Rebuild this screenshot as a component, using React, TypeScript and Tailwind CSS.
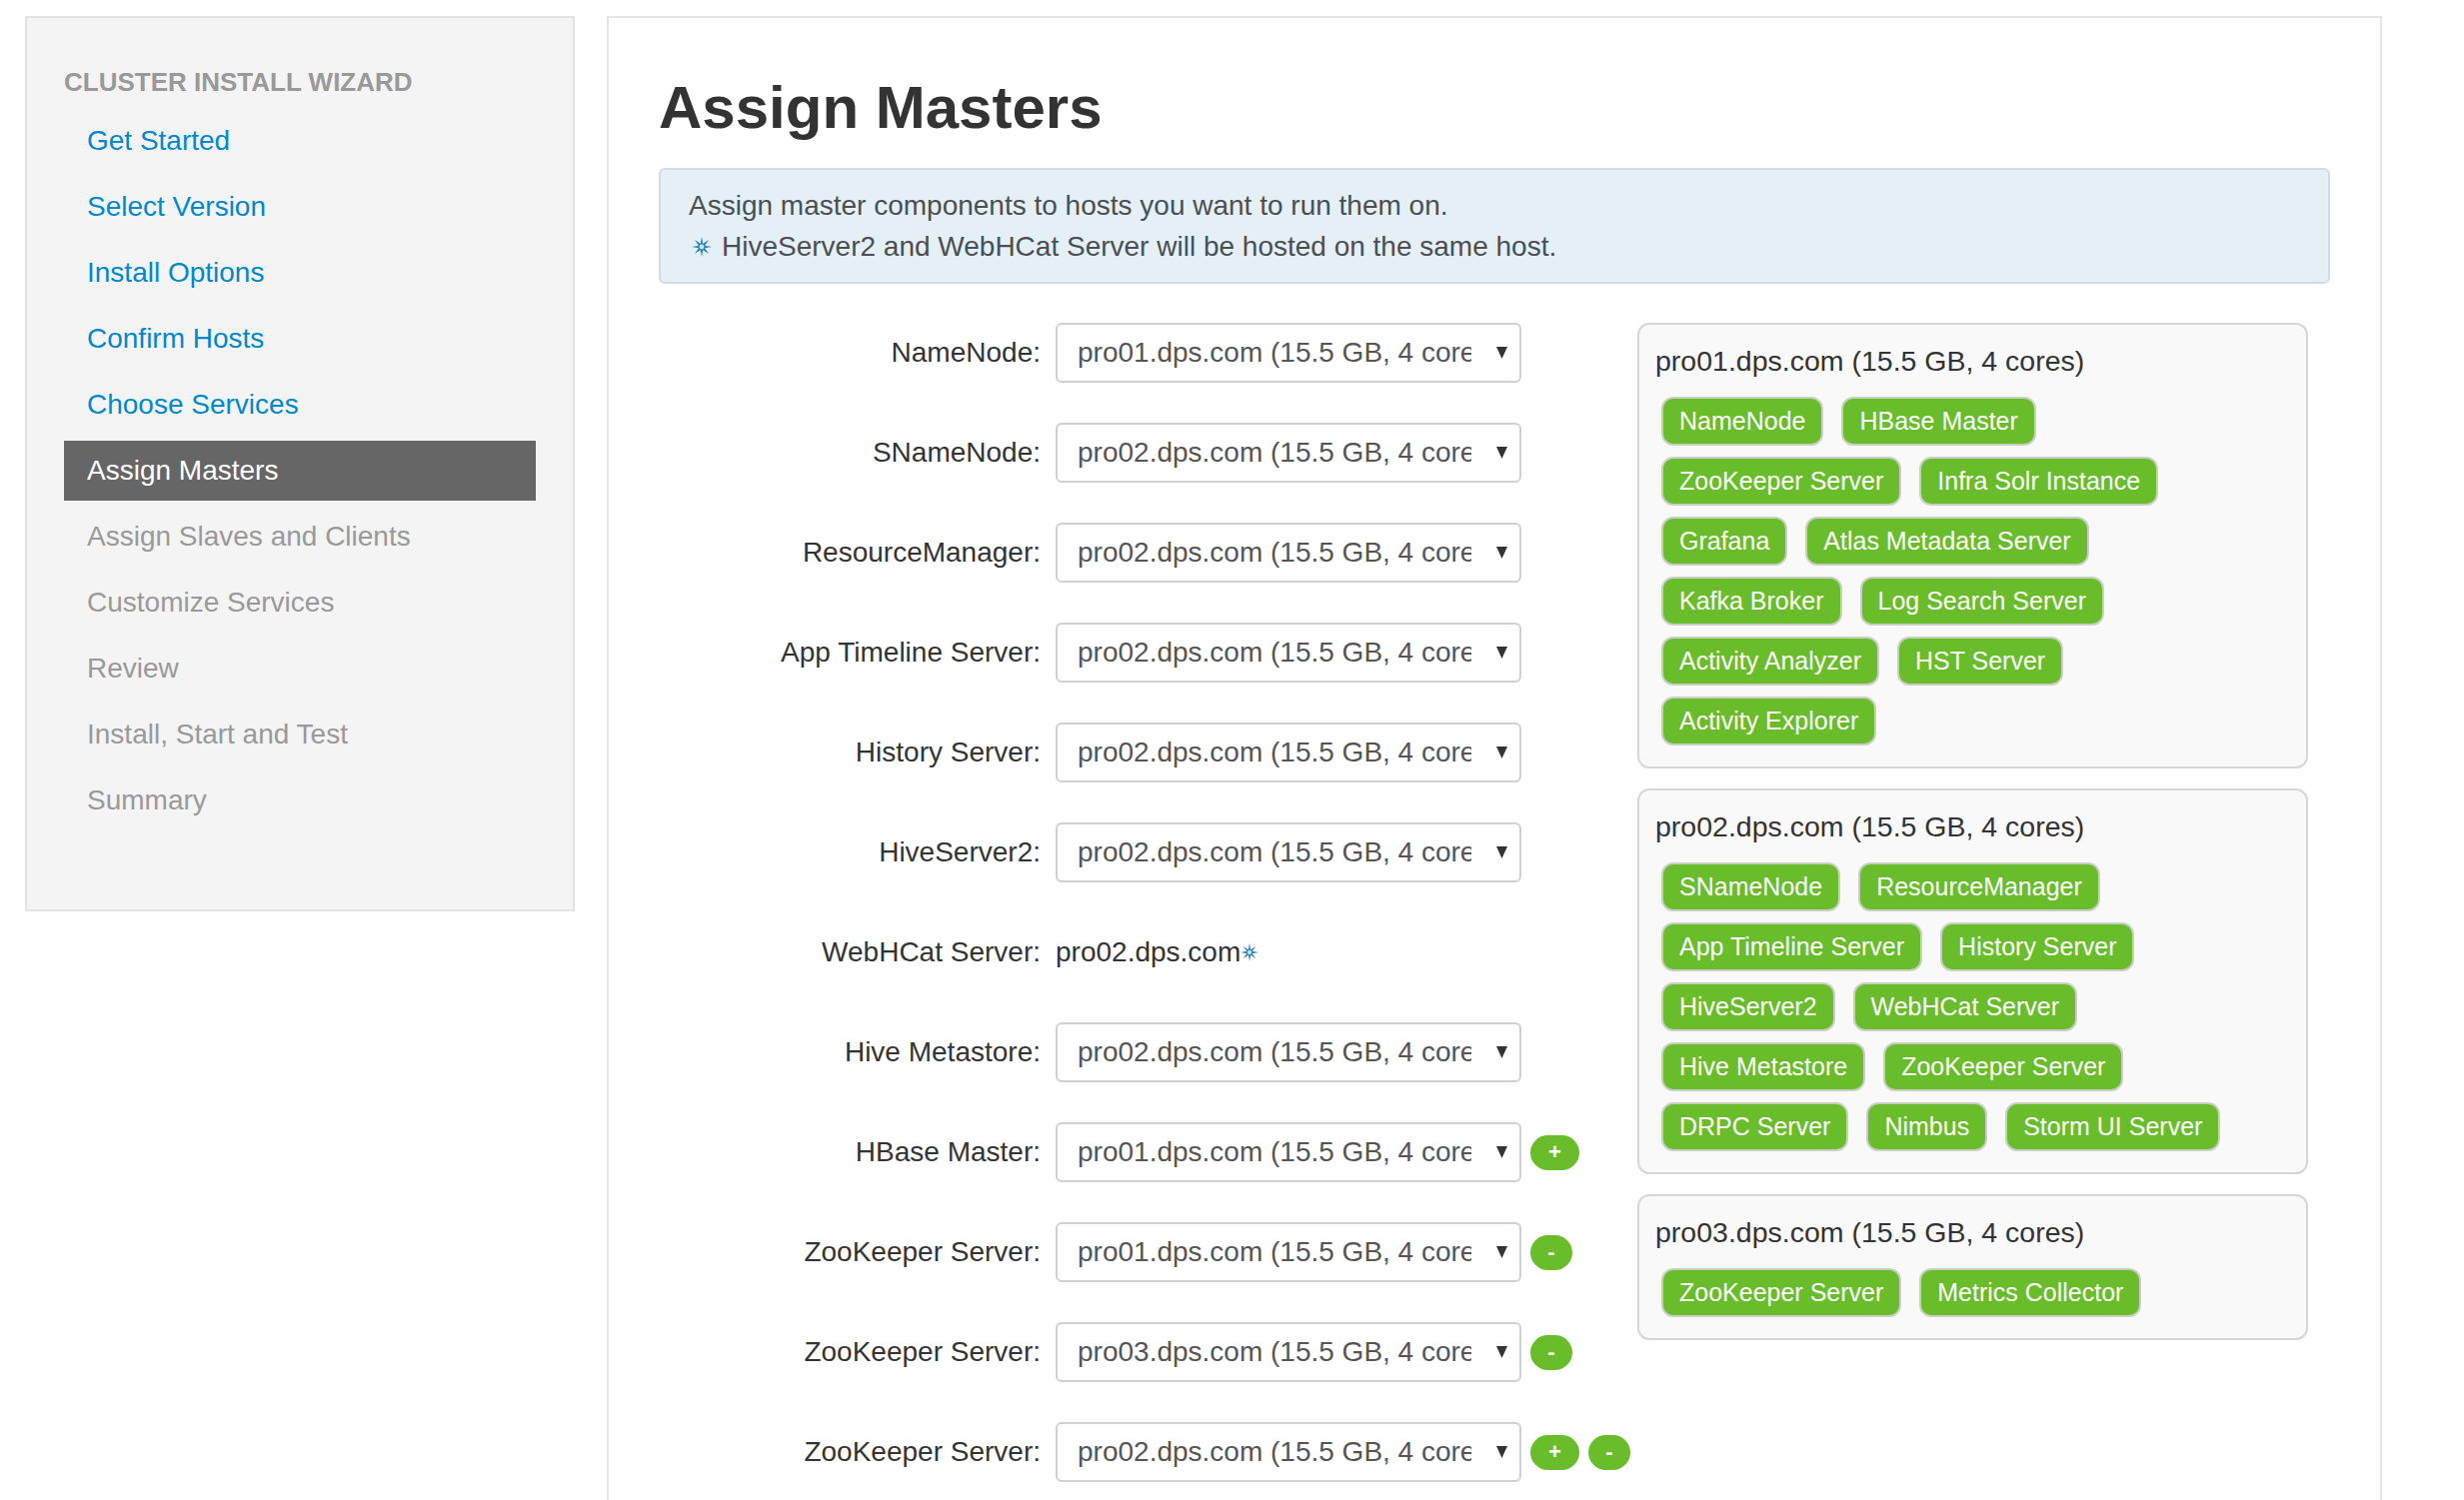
import React from "react";

const steps = [
  { label: "Get Started", state: "done" },
  { label: "Select Version", state: "done" },
  { label: "Install Options", state: "done" },
  { label: "Confirm Hosts", state: "done" },
  { label: "Choose Services", state: "done" },
  { label: "Assign Masters", state: "active" },
  { label: "Assign Slaves and Clients", state: "todo" },
  { label: "Customize Services", state: "todo" },
  { label: "Review", state: "todo" },
  { label: "Install, Start and Test", state: "todo" },
  { label: "Summary", state: "todo" },
];

type Row = {
  label: string;
  host: string;
  fixed?: boolean;
  plus?: boolean;
  minus?: boolean;
};

const rows: Row[] = [
  { label: "NameNode", host: "pro01" },
  { label: "SNameNode", host: "pro02" },
  { label: "ResourceManager", host: "pro02" },
  { label: "App Timeline Server", host: "pro02" },
  { label: "History Server", host: "pro02" },
  { label: "HiveServer2", host: "pro02" },
  { label: "WebHCat Server", host: "pro02", fixed: true },
  { label: "Hive Metastore", host: "pro02" },
  { label: "HBase Master", host: "pro01", plus: true },
  { label: "ZooKeeper Server", host: "pro01", minus: true },
  { label: "ZooKeeper Server", host: "pro03", minus: true },
  { label: "ZooKeeper Server", host: "pro02", plus: true, minus: true },
];

const hosts = [
  {
    name: "pro01",
    rows: [
      ["NameNode", "HBase Master"],
      ["ZooKeeper Server", "Infra Solr Instance"],
      ["Grafana", "Atlas Metadata Server"],
      ["Kafka Broker", "Log Search Server"],
      ["Activity Analyzer", "HST Server"],
      ["Activity Explorer"],
    ],
  },
  {
    name: "pro02",
    rows: [
      ["SNameNode", "ResourceManager"],
      ["App Timeline Server", "History Server"],
      ["HiveServer2", "WebHCat Server"],
      ["Hive Metastore", "ZooKeeper Server"],
      ["DRPC Server", "Nimbus", "Storm UI Server"],
    ],
  },
  {
    name: "pro03",
    rows: [["ZooKeeper Server", "Metrics Collector"]],
  },
];

function Star({ size = 20 }: { size?: number }) {
  const pts: string[] = [];
  for (let i = 0; i < 16; i++) {
    const a = (i * Math.PI) / 8 - Math.PI / 2;
    const r = i % 2 === 0 ? 10 : 3.4;
    pts.push(`${(10 + r * Math.cos(a)).toFixed(2)},${(10 + r * Math.sin(a)).toFixed(2)}`);
  }
  return (
    <svg width={size} height={size} viewBox="0 0 20 20" className="inline-block shrink-0">
      <polygon points={pts.join(" ")} fill="#2c86b4" />
      <circle cx="10" cy="10" r="2.4" fill="#bfe3f2" />
    </svg>
  );
}

function HostSelect({ host }: { host: string }) {
  return (
    <div className="flex h-[60px] w-[466px] items-center rounded-[6px] border-2 border-[#d0d0d0] bg-white pl-[20px]">
      <span className="w-[394px] overflow-hidden whitespace-nowrap text-[28px] text-[#555]">
        {host}.dps.com (15.5 GB, 4 cores)
      </span>
      <svg width="11" height="12" viewBox="0 0 11 12" className="ml-[25px]">
        <polygon points="0,0 11,0 5.5,12" fill="#333" />
      </svg>
    </div>
  );
}

function RoundBtn({ sign }: { sign: "+" | "-" }) {
  return (
    <span
      className={
        sign === "+"
          ? "flex h-[35px] w-[49px] items-center justify-center rounded-full bg-[#6abd2a] text-[22px] font-bold leading-none text-white"
          : "flex h-[35px] w-[42px] items-center justify-center rounded-full bg-[#6abd2a] text-[22px] font-bold leading-none text-white"
      }
    >
      {sign}
    </span>
  );
}

export default function App() {
  return (
    <div className="flex min-h-screen items-start gap-[32px] bg-white pl-[25px] pt-[16px] font-['Liberation_Sans',Arial,sans-serif]">
      <aside className="h-[896px] w-[550px] shrink-0 border-2 border-[#e3e3e3] bg-[#f4f4f4] px-[37px] pt-[46px]">
        <div className="mb-[11px] text-[26px] font-bold leading-[36px] text-[#999]">
          CLUSTER INSTALL WIZARD
        </div>
        <ul className="flex flex-col gap-[6px]">
          {steps.map((s) => (
            <li
              key={s.label}
              className={
                s.state === "active"
                  ? "flex h-[60px] items-center bg-[#666] pl-[23px] pr-[24px] text-[28px] text-white"
                  : s.state === "done"
                  ? "flex h-[60px] items-center pl-[23px] pr-[24px] text-[28px] text-[#0088cc]"
                  : "flex h-[60px] items-center pl-[23px] pr-[24px] text-[28px] text-[#999]"
              }
            >
              {s.label}
            </li>
          ))}
        </ul>
      </aside>

      <main className="w-[1776px] shrink-0 border-2 border-[#e6e6e6] bg-white px-[50px] pb-[80px] pt-[57px]">
        <h1 className="mb-[28px] text-[60px] font-bold leading-[65px] text-[#333]">
          Assign Masters
        </h1>
        <div className="mb-[39px] rounded-[6px] border-2 border-[#d2dde3] bg-[#e5f0f6] pb-[15px] pl-[28px] pt-[15px] text-[28px] leading-[41px] text-[#4a4f53]">
          <div>Assign master components to hosts you want to run them on.</div>
          <div className="flex items-center gap-[10px] pl-[3px]">
            <Star />
            <span>HiveServer2 and WebHCat Server will be hosted on the same host.</span>
          </div>
        </div>

        <div className="flex items-start">
          <div className="flex w-[979px] flex-col gap-[40px]">
            {rows.map((r, i) => (
              <div key={i} className="flex h-[60px] items-center">
                <label className="w-[382px] text-right text-[28px] text-[#333]">
                  {r.label}:
                </label>
                <div className="ml-[15px]">
                  {r.fixed ? (
                    <span className="flex items-center text-[28px] text-[#333]">
                      {r.host}.dps.com
                      <Star size={18} />
                    </span>
                  ) : (
                    <HostSelect host={r.host} />
                  )}
                </div>
                {(r.plus || r.minus) && (
                  <div className="ml-[9px] flex gap-[9px]">
                    {r.plus && <RoundBtn sign="+" />}
                    {r.minus && <RoundBtn sign="-" />}
                  </div>
                )}
              </div>
            ))}
          </div>

          <div className="flex w-[671px] flex-col gap-[20px]">
            {hosts.map((h) => (
              <div
                key={h.name}
                className="rounded-[12px] border-2 border-[#d6d6d6] bg-[#f9f9f9] px-[16px] pb-[21px] pt-[19px]"
              >
                <div className="mb-[19px] text-[28.5px] leading-[34px] text-[#333]">
                  {h.name}.dps.com (15.5 GB, 4 cores)
                </div>
                <div className="ml-[6px] flex flex-col gap-[11px]">
                  {h.rows.map((row, j) => (
                    <div key={j} className="flex gap-[18px]">
                      {row.map((c) => (
                        <span
                          key={c}
                          className="flex h-[49px] items-center rounded-[12px] border-2 border-[#c9cfc4] bg-[#6abd2a] px-[16px] text-[25px] text-white"
                        >
                          {c}
                        </span>
                      ))}
                    </div>
                  ))}
                </div>
              </div>
            ))}
          </div>
        </div>
      </main>
    </div>
  );
}
